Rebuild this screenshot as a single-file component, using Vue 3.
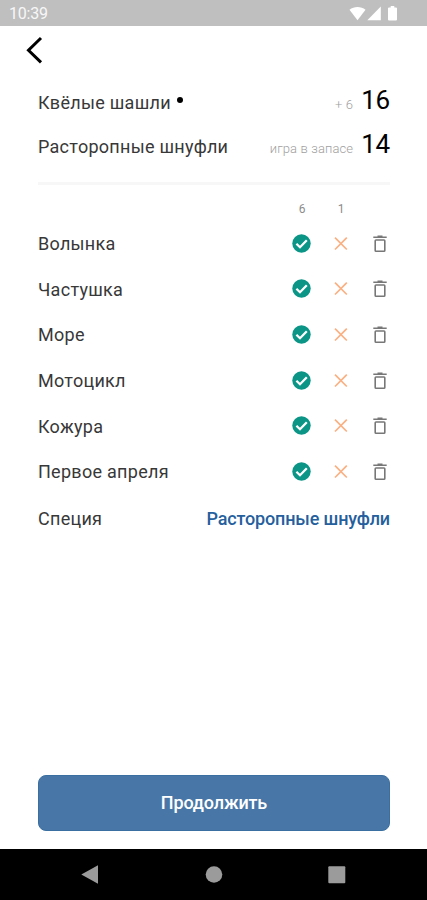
<template>
    <div class="screen">
        <div class="status-bar">
            <span class="status-time">10:39</span>
            <svg class="status-icons" width="50" height="16" viewBox="0 0 50 16">
                <path d="M0.500 3.800C5 0 12 0 16.500 3.800L8.500 14.200Z" />
                <path d="M31.800 .4V14.200H18.300Z" />
                <path
                    d="M41.700 0h3.600v1.400h1.700q1 0 1 1v11.200q0 1-1 1h-7q-1 0-1-1V2.400q0-1 1-1h1.700Z"
                />
            </svg>
        </div>

        <div class="toolbar">
            <button class="back-button" aria-label="Назад">
                <svg width="18" height="28" viewBox="0 0 18 28">
                    <path d="M16 2 3.500 14.200 16 26.400" />
                </svg>
            </button>
        </div>

        <div class="content">
            <div class="teams">
                <div v-for="team in teams" :key="team.name" class="team">
                    <span class="name">{{ team.name }}</span>
                    <span v-if="team.active" class="team-dot"></span>
                    <span class="team-note">{{ team.note }}</span>
                    <span class="team-score">{{ team.score }}</span>
                </div>
            </div>

            <div class="totals">
                <span>{{ guessed }}</span>
                <span>{{ missed }}</span>
                <span></span>
            </div>

            <div v-for="word in words" :key="word" class="word">
                <span class="name">{{ word }}</span>
                <svg class="icon icon-check" viewBox="0 0 20 20">
                    <circle cx="9.500" cy="9.500" r="9.200" />
                    <path d="M4.400 9.700 8 13.200 14.800 6.300" />
                </svg>
                <svg class="icon icon-cross" viewBox="0 0 20 20">
                    <path d="M4 3.700 15.800 15.500M15.800 3.700 4 15.500" />
                </svg>
                <svg class="icon icon-trash" viewBox="0 0 20 20">
                    <path d="M3.300 3.200H16.700M7.500 2.300H12.500" />
                    <rect x="5.200" y="6" width="9.600" height="11.300" rx="0.800" />
                </svg>
            </div>

            <div class="last-word">
                <span class="name">Специя</span>
                <span class="last-team">Расторопные шнуфли</span>
            </div>

            <button class="next-button">Продолжить</button>
        </div>

        <div class="nav-bar">
            <svg width="20" height="20" viewBox="0 0 20 20">
                <path d="M1.300 9.500 18 .3V18.700Z" />
            </svg>
            <svg width="20" height="20" viewBox="0 0 20 20">
                <circle cx="10" cy="9.500" r="8.300" />
            </svg>
            <svg width="20" height="20" viewBox="0 0 20 20">
                <rect x="1.300" y="1.200" width="17" height="17" rx="1" />
            </svg>
        </div>
    </div>
</template>

<script setup>
import { ref } from "vue";

const teams = ref([
    { name: "Квёлые шашли", active: true, note: "+ 6", score: 16 },
    {
        name: "Расторопные шнуфли",
        active: false,
        note: "игра в запасе",
        score: 14,
    },
]);

const guessed = ref(6);
const missed = ref(1);

const words = ref([
    "Волынка",
    "Частушка",
    "Море",
    "Мотоцикл",
    "Кожура",
    "Первое апреля",
]);
</script>

<style>
body {
    background: #fff;
}
</style>

<style scoped>
.screen {
    display: flex;
    flex-direction: column;
    height: 900px;
    box-sizing: border-box;
    overflow: hidden;
    background: #fff;
    font-family: Roboto, sans-serif;
    color: #383838;
}

.status-bar {
    display: flex;
    align-items: center;
    justify-content: space-between;
    height: 26px;
    padding: 1px 28px 0 9px;
    box-sizing: border-box;
    background: #bfbfbf;
    color: #f7f7f7;
    font-size: 16px;
}

.status-time {
    letter-spacing: -0.2px;
}

.status-icons {
    margin-top: 1px;
    fill: #fff;
}

.toolbar {
    height: 53px;
    padding: 10px 0 0 25px;
    box-sizing: border-box;
}

.back-button {
    display: block;
    padding: 0;
    border: none;
    background: none;
    cursor: pointer;
}

.back-button svg {
    display: block;
    fill: none;
    stroke: #000;
    stroke-width: 3;
}

.content {
    display: flex;
    flex: 1;
    flex-direction: column;
    padding: 0 37px 18px 38px;
}

.teams {
    padding: 0 0 16px;
    border-bottom: 3px solid #f7f7f7;
}

.team {
    display: flex;
    align-items: baseline;
    height: 43.500px;
    line-height: 43px;
}

.name {
    font-size: 18px;
    letter-spacing: 0.28px;
}

.team-dot {
    width: 6px;
    height: 6px;
    margin-left: 6px;
    border-radius: 50%;
    background: #000;
    align-self: flex-start;
    margin-top: 18px;
}

.team-note {
    margin-left: auto;
    color: #a0a0a0;
    font-size: 13px;
    font-weight: 300;
    letter-spacing: 0.12px;
}

.team-score {
    margin-left: 8px;
    color: #000;
    font-size: 26px;
    letter-spacing: -0.2px;
}

.totals,
.word {
    display: grid;
    grid-template-columns: 20px 20px 20px;
    column-gap: 19px;
    justify-content: end;
    align-items: center;
}

.totals {
    height: 36px;
    padding-top: 11px;
    box-sizing: border-box;
    color: #8c8c8c;
    font-size: 12px;
    text-align: center;
}

.word {
    grid-template-columns: 1fr 20px 20px 20px;
    height: 45.600px;
}

.icon {
    display: block;
    width: 20px;
    height: 20px;
    fill: none;
}

.icon-check circle {
    fill: #0b9587;
}

.icon-check path {
    stroke: #fff;
    stroke-width: 2.3;
}

.icon-cross {
    stroke: #fbb082;
    stroke-width: 1.7;
}

.icon-trash {
    stroke: #777;
    stroke-width: 1.6;
}

.last-word {
    display: flex;
    align-items: center;
    justify-content: space-between;
    height: 48px;
}

.last-team {
    color: #265f9d;
    font-size: 18px;
    font-weight: 500;
    letter-spacing: -0.14px;
}

.next-button {
    height: 56px;
    margin-top: auto;
    padding-bottom: 3px;
    border: 1px solid #3a6fa2;
    border-radius: 8px;
    background: #4877a7;
    color: #fff;
    font-family: inherit;
    font-size: 18px;
    font-weight: 500;
    letter-spacing: -0.15px;
    cursor: pointer;
}

.nav-bar {
    display: flex;
    align-items: center;
    justify-content: space-between;
    height: 51px;
    padding: 0 80px;
    box-sizing: border-box;
    background: #000;
    fill: #9b9b9b;
}
</style>
